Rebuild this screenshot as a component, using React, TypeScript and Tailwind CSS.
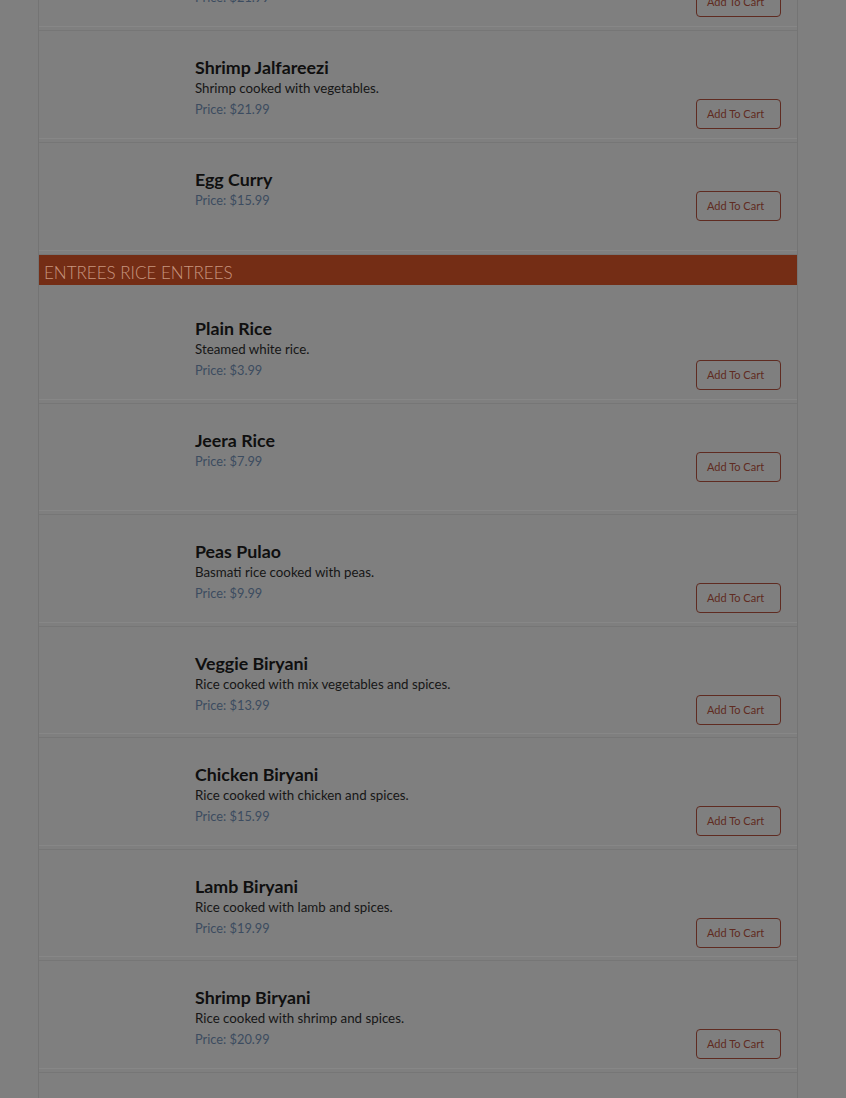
import React from "react";

type Item = { name: string; desc?: string; price: string };

const before: Item[] = [
  { name: "Shrimp Curry", desc: "Shrimp cooked in curry sauce.", price: "$21.99" },
  { name: "Shrimp Jalfareezi", desc: "Shrimp cooked with vegetables.", price: "$21.99" },
  { name: "Egg Curry", price: "$15.99" },
];

const rice: Item[] = [
  { name: "Plain Rice", desc: "Steamed white rice.", price: "$3.99" },
  { name: "Jeera Rice", price: "$7.99" },
  { name: "Peas Pulao", desc: "Basmati rice cooked with peas.", price: "$9.99" },
  { name: "Veggie Biryani", desc: "Rice cooked with mix vegetables and spices.", price: "$13.99" },
  { name: "Chicken Biryani", desc: "Rice cooked with chicken and spices.", price: "$15.99" },
  { name: "Lamb Biryani", desc: "Rice cooked with lamb and spices.", price: "$19.99" },
  { name: "Shrimp Biryani", desc: "Rice cooked with shrimp and spices.", price: "$20.99" },
  { name: "Chicken Fried Rice", desc: "Rice fried with chicken.", price: "$14.99" },
];

function Row({ item, first, h }: { item: Item; first?: boolean; h: string }) {
  return (
    <div className={"flex flex-col border-b border-[#767676] " + h}>
      <div className={"flex items-end pl-[156px] pr-4 " + (first ? "pt-[33px]" : "pt-[26px]")}>
        <div className={"flex-1 " + (item.desc ? "pb-[9px]" : "pb-[10px]")}>
          <div className="text-[17.8px] leading-[21px] font-bold text-[#0f0f0f]">{item.name}</div>
          {item.desc && (
            <div className="text-[13.3px] leading-[21px] text-[#161616]">{item.desc}</div>
          )}
          <div className="text-[12.8px] leading-[21px] text-[#3c4c60]">Price: {item.price}</div>
        </div>
        <button className="w-[85px] h-[30px] rounded-[4px] border border-[#5f2b21] text-[11px] text-[#5f2b21] text-left pl-[10px]">
          Add To Cart
        </button>
      </div>
      <div className="mt-auto mb-[3px] h-px bg-[#878787]" />
    </div>
  );
}

const riceHeights = [
  "h-[119px]",
  "h-[111px]",
  "h-[112px]",
  "h-[111px]",
  "h-[112px]",
  "h-[111px]",
  "h-[112px]",
  "h-[111px]",
];

export default function App() {
  return (
    <div
      className="min-h-[1098px] bg-[#7f7f7f] overflow-hidden"
      style={{ fontFamily: "Lato, 'Open Sans', sans-serif" }}
    >
      <div className="mt-[-81px] ml-[38px] w-[760px] border-x border-[#747474] bg-[#7f7f7f]">
        {before.map((it) => (
          <Row key={it.name} item={it} h="h-[112px]" />
        ))}
        <div className="h-[30px] bg-[#742d15] px-[5px] text-[17px] leading-[35px] font-light text-[#c8957f]">
          ENTREES RICE ENTREES
        </div>
        {rice.map((it, i) => (
          <Row key={it.name} item={it} first={i === 0} h={riceHeights[i]} />
        ))}
      </div>
    </div>
  );
}
